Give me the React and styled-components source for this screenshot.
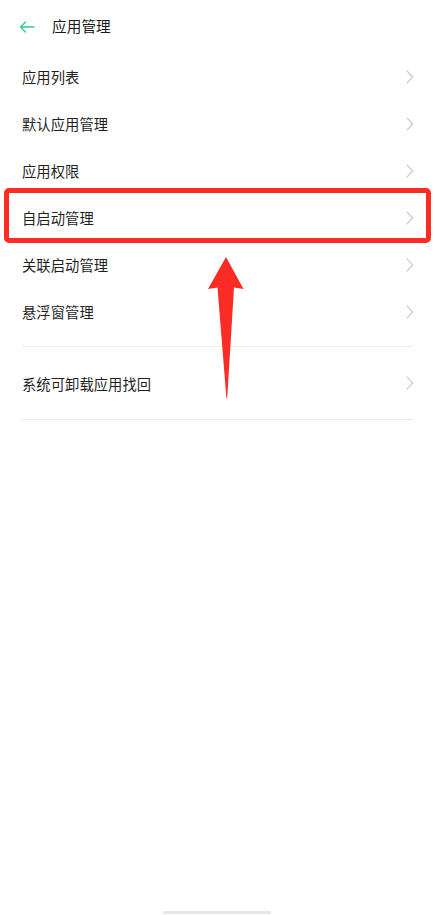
import React from "react";
import styled, { createGlobalStyle } from "styled-components";

const Global = createGlobalStyle`
  html, body { margin: 0; padding: 0; background: #fff; }
  body { font-family: "Noto Sans CJK SC", "Noto Sans", sans-serif; color: #1f1f1f; }
`;

const Page = styled.div`
  position: relative;
  width: 435px;
  height: 915px;
  background: #fff;
  overflow: hidden;
`;

const Header = styled.div`
  height: 53px;
  display: flex;
  align-items: center;
  padding-left: 19px;
  gap: 17px;
`;

const Title = styled.div`
  font-size: 14.6px;
  line-height: 1;
  color: #1a1a1a;
  letter-spacing: 0.1px;
  padding-bottom: 0px;
`;

const List = styled.div`
  display: flex;
  flex-direction: column;
`;

const Row = styled.div`
  position: relative;
  height: ${(p) => p.$h || 47}px;
  display: flex;
  align-items: center;
  justify-content: space-between;
  margin: 0 22px;
  border-top: ${(p) => (p.$lineTop ? "1px solid #ececec" : "none")};
  border-bottom: ${(p) => (p.$lineBottom ? "1px solid #ececec" : "none")};
`;

const Label = styled.span`
  font-size: 14.3px;
  color: #1f1f1f;
  letter-spacing: 0.05px;
`;

const Spacer = styled.div`
  height: ${(p) => p.$h}px;
`;

const Highlight = styled.div`
  position: absolute;
  left: -18px;
  right: -18px;
  top: -6px;
  bottom: -2px;
  border: 5px solid #fb2b25;
  border-radius: 5px;
  pointer-events: none;
`;

const ArrowOverlay = styled.svg`
  position: absolute;
  left: 0;
  top: 0;
`;

const HomeBar = styled.div`
  position: absolute;
  left: 163px;
  bottom: 1px;
  width: 108px;
  height: 3px;
  border-radius: 2px;
  background: #e6e6e6;
`;

const Chevron = () => (
  <svg width="8" height="14" viewBox="0 0 8 14" style={{ marginRight: -1 }}>
    <path d="M1.2 1.2 L6.6 7 L1.2 12.8" fill="none" stroke="#c9c9c9" strokeWidth="1.2" strokeLinecap="round" strokeLinejoin="round" />
  </svg>
);

const BackArrow = () => (
  <svg width="16" height="12" viewBox="0 0 16 12">
    <path d="M15 6 H1.5 M6.5 1 L1.5 6 L6.5 11" fill="none" stroke="#35c98a" strokeWidth="1.4" strokeLinecap="round" strokeLinejoin="round" />
  </svg>
);

const items = ["应用列表", "默认应用管理", "应用权限", "自启动管理", "关联启动管理", "悬浮窗管理"];

export default function App() {
  return (
    <Page>
      <Global />
      <Header>
        <BackArrow />
        <Title>应用管理</Title>
      </Header>
      <List>
        {items.map((t) => (
          <Row key={t}>
            <Label>{t}</Label>
            <Chevron />
            {t === "自启动管理" && <Highlight />}
          </Row>
        ))}
        <Spacer $h={11} />
        <Row $h={72} $lineTop $lineBottom>
          <Label>系统可卸载应用找回</Label>
          <Chevron />
        </Row>
      </List>
      <ArrowOverlay width="435" height="915" viewBox="0 0 435 915">
        <path d="M226 257 L243.5 289 L234 287.5 L227.2 398 L226.4 398 L217.5 287.5 L208 289 Z" fill="#fb2b25" />
      </ArrowOverlay>
      <HomeBar />
    </Page>
  );
}
